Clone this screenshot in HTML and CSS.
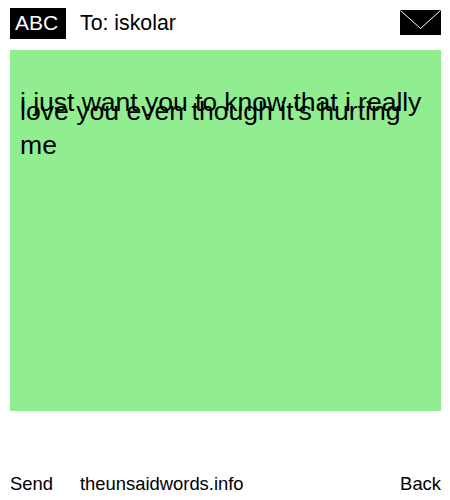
FILE: index.html
```html
<!DOCTYPE html>
<html lang="en">
<head>
    <meta charset="UTF-8">
    <meta name="viewport" content="width=device-width, initial-scale=1.0">
    <title>The Unsaid Words</title>
    <link rel="stylesheet" href="styles.css">
</head>
<body>
    <div class="container">
        <div class="header">
            <div class="logo">ABC</div>
            <div class="recipient">To: iskolar</div>
            <svg class="envelope" width="41" height="25" viewBox="0 0 41 25">
                <rect width="41" height="25" fill="#000"/>
                <path d="M0.5 0.5L20.5 18.5L40.5 0.5" fill="none" stroke="#fff" stroke-width="1"/>
            </svg>
        </div>
        <div class="message">
            <p class="first-line">i just want you to know that i really</p>
            <p class="rest-lines">love you even though it's hurting me</p>
        </div>
        <div class="footer">
            <span class="send">Send</span>
            <span class="site">theunsaidwords.info</span>
            <span class="back">Back</span>
        </div>
    </div>
</body>
</html>
```

FILE: styles.css
```css
* {
    margin: 0;
    padding: 0;
    box-sizing: border-box;
}

body {
    font-family: "Liberation Sans", Arial, sans-serif;
    background-color: #fff;
    color: #000;
}

.container {
    display: flex;
    flex-direction: column;
    width: 450px;
    height: 500px;
    padding: 8px 9px 0 10px;
}

.header {
    display: flex;
    align-items: center;
    height: 31px;
    font-size: 21.3px;
}

.logo {
    width: 56px;
    height: 31px;
    padding-left: 5px;
    line-height: 29px;
    font-size: 21px;
    background-color: #000;
    color: #fff;
}

.recipient {
    flex: 1;
    margin-left: 14px;
}

.envelope {
    display: block;
    margin-top: -2px;
}

.message {
    height: 361px;
    margin-top: 11px;
    padding: 35px 10px 0;
    background-color: #90ee90;
    font-size: 26.6px;
    line-height: 34px;
}

.first-line {
    letter-spacing: -0.06px;
}

.rest-lines {
    margin-top: -25px;
}

.footer {
    display: flex;
    margin-top: 62px;
    font-size: 18.4px;
    line-height: 22px;
}

.send {
    width: 70px;
}

.site {
    flex: 1;
}
```
